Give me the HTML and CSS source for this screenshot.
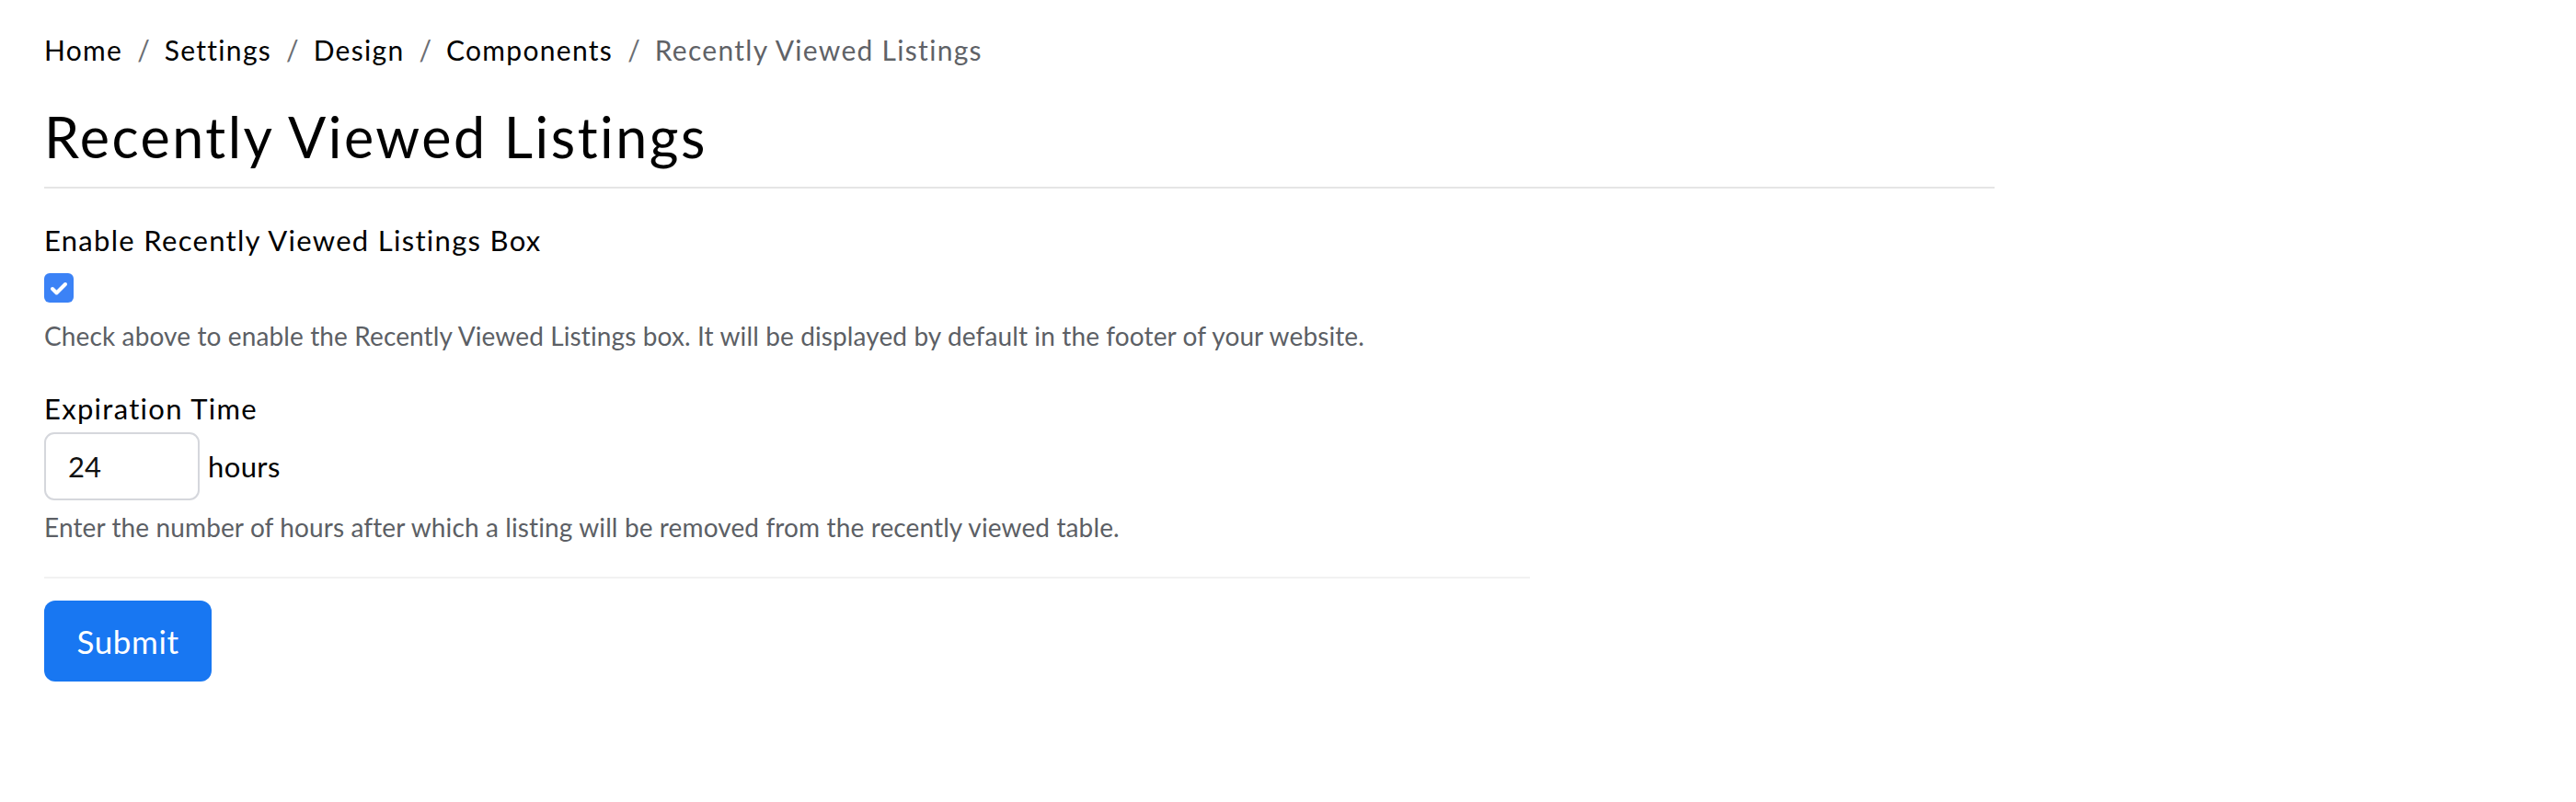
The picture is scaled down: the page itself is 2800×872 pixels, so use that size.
FILE: index.html
```html
<!DOCTYPE html>
<html lang="en">
<head>
<meta charset="utf-8">
<title>Recently Viewed Listings</title>
<link rel="stylesheet" href="styles.css">
</head>
<body>
<div class="page">
  <nav class="breadcrumb">
    <a href="#">Home</a><span class="sep">/</span><a href="#">Settings</a><span class="sep">/</span><a href="#">Design</a><span class="sep">/</span><a href="#">Components</a><span class="sep">/</span><span class="current">Recently Viewed Listings</span>
  </nav>
  <header class="page-header">
    <h1>Recently Viewed Listings</h1>
  </header>
  <form class="settings-form">
    <div class="field">
      <label class="field-label">Enable Recently Viewed Listings Box</label>
      <span class="checkbox" role="checkbox" aria-checked="true">
        <svg viewBox="0 0 32 32" width="32" height="32"><polyline points="9,17 13.5,21.5 23,12" fill="none" stroke="#fff" stroke-width="4" stroke-linecap="round" stroke-linejoin="round"/></svg>
      </span>
      <p class="help">Check above to enable the Recently Viewed Listings box. It will be displayed by default in the footer of your website.</p>
    </div>
    <div class="field field-second">
      <label class="field-label">Expiration Time</label>
      <div class="input-row">
        <input class="text-input" type="text" value="24">
        <span class="unit">hours</span>
      </div>
      <p class="help help-second">Enter the number of hours after which a listing will be removed from the recently viewed table.</p>
    </div>
    <div class="form-actions">
      <button type="button" class="btn-primary">Submit</button>
    </div>
  </form>
</div>
</body>
</html>
```

FILE: styles.css
```css
* { box-sizing: border-box; }
html, body { margin: 0; padding: 0; background: #fff; }
body {
  font-family: "Lato", "Inter", "Noto Sans", sans-serif;
  color: #000;
}
.page {
  padding: 32px 0 0 48px;
}
.breadcrumb {
  font-size: 30px;
  line-height: 45px;
  letter-spacing: 1.3px;
  display: flex;
  align-items: baseline;
}
.breadcrumb a { color: #000; text-decoration: none; }
.breadcrumb .sep { color: #6b6e73; margin: 0 16px; letter-spacing: 0; }
.breadcrumb .current { color: #5f6267; }
.page-header {
  width: 2120px;
  margin-top: 35px;
  padding-bottom: 18px;
  border-bottom: 2px solid #e5e5e5;
}
.page-header h1 {
  margin: 0;
  font-size: 61px;
  font-weight: 400;
  line-height: 1.2;
  letter-spacing: 2.5px;
}
.settings-form { width: 1615px; }
.field { margin-top: 38px; }
.field-second { margin-top: 43px; }
.field-label {
  display: block;
  font-size: 31px;
  line-height: 1.2;
  letter-spacing: 1.3px;
}
.checkbox {
  display: block;
  width: 32px;
  height: 32px;
  margin-top: 17px;
  border-radius: 6px;
  background: #3b82f6;
}
.checkbox svg { display: block; }
.help {
  margin: 20px 0 0;
  font-size: 28px;
  line-height: 1.2;
  letter-spacing: 0.12px;
  color: #5c5f65;
}
.help-second { margin-top: 13px; }
.input-row {
  margin-top: 7px;
  display: flex;
  align-items: baseline;
  gap: 9px;
}
.text-input {
  width: 169px;
  height: 74px;
  padding: 0 24px;
  border: 2px solid #d5d7dc;
  border-radius: 11px;
  font-family: inherit;
  font-size: 31px;
  color: #111;
  background: #fff;
}
.unit { font-size: 31px; letter-spacing: 0.4px; }
.form-actions {
  margin-top: 36px;
  padding-top: 24px;
  border-top: 2px solid #f2f2f2;
}
.btn-primary {
  width: 182px;
  height: 88px;
  border: none;
  border-radius: 12px;
  background: #1877f2;
  color: #fff;
  font-family: inherit;
  font-size: 35px;
  letter-spacing: 0.6px;
  padding: 0;
}
```
